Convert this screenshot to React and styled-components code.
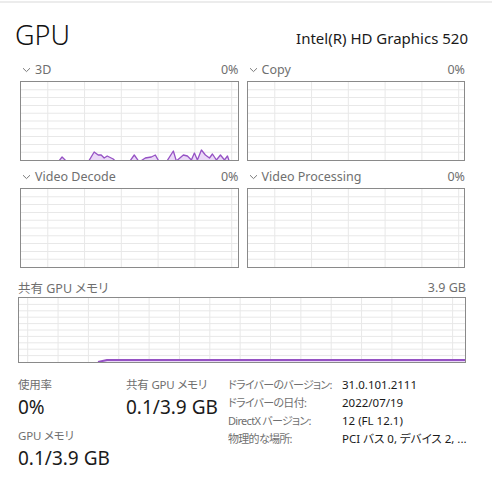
import React from 'react'
import styled, { createGlobalStyle } from 'styled-components'

const GlobalStyle = createGlobalStyle`
  html, body {
    margin: 0;
    padding: 0;
    background: #ffffff;
  }
  body {
    font-family: "Noto Sans", "Noto Sans CJK JP", sans-serif;
    font-feature-settings: "palt";
  }
`

const Page = styled.div`
  width: 492px;
  height: 490px;
  box-sizing: border-box;
  border-top: 2px solid #ececec;
  margin-top: 1px;
  padding: 0 26px 0 18px;
  overflow: hidden;
`

const Header = styled.div`
  display: flex;
  align-items: flex-end;
  justify-content: space-between;
  height: 48px;
`

const Title = styled.h1`
  margin: 0;
  margin-left: -3px;
  font-size: 27px;
  font-weight: 300;
  color: #111;
  line-height: 30px;
  padding-bottom: 1px;
`

const Device = styled.div`
  font-size: 15px;
  color: #1a1a1a;
  line-height: 20px;
  padding-bottom: 3px;
  margin-right: -2px;
`

const EngineGrid = styled.div`
  display: grid;
  grid-template-columns: 1fr 1fr;
  column-gap: 8px;
  padding: 0 1px 0 2px;
  margin-top: 9px;
`

const Panel = styled.div`
  display: flex;
  flex-direction: column;
  margin-bottom: ${p => p.$gap || 0}px;
`

const LabelRow = styled.div`
  display: flex;
  align-items: center;
  justify-content: space-between;
  height: 19px;
  font-size: 12.5px;
  color: #6f6f6f;
  margin-bottom: ${p => p.$space || 0}px;
`

const LabelLeft = styled.span`
  display: flex;
  align-items: center;
  gap: 4px;
`

const Chevron = styled.svg`
  width: 9px;
  height: 6px;
  margin-left: 2px;
`

const ChartBox = styled.div`
  height: ${p => p.$h}px;
  border: 1px solid #8a8a8a;
  box-sizing: border-box;
  background: #fff;
  svg {
    display: block;
    width: 100%;
    height: 100%;
  }
`

const Stats = styled.div`
  display: grid;
  grid-template-columns: 108px 102px 1fr;
  align-items: start;
  margin-top: 13px;
`

const StatCol = styled.div`
  display: flex;
  flex-direction: column;
`

const StatLabel = styled.div`
  font-size: 11.5px;
  line-height: 18px;
  letter-spacing: -0.2px;
  color: #707070;
`

const StatValue = styled.div`
  font-size: 19px;
  line-height: 26px;
  color: #1a1a1a;
  margin: 0 0 7px;
  white-space: nowrap;
`

const Details = styled.div`
  display: grid;
  grid-template-columns: 114px 1fr;
  align-content: start;
  font-size: 11.5px;
  line-height: 18px;
  white-space: nowrap;
`

const DetailKey = styled.span`
  color: #707070;
  font-size: 11px;
  letter-spacing: -0.7px;
`

const DetailVal = styled.span`
  color: #1a1a1a;
`

const LINE = '#9552c4'
const FILL = '#ead8f7'
const GRID = '#e8e8e8'

const threeD = [
  [37, 80], [41, 75], [45, 79], [50, 80], [53, 79], [57, 80], [67, 80], [73, 70], [77, 73],
  [80, 73], [83, 76], [86, 74], [92, 77], [95, 80], [108, 80], [113, 73], [118, 80], [124, 76],
  [130, 75], [134, 73], [138, 80], [145, 80], [152, 69], [155, 79], [162, 73], [166, 74],
  [170, 78], [173, 71], [176, 78], [180, 68], [184, 73], [188, 76], [191, 72], [195, 78],
  [199, 73], [203, 78], [206, 74], [208, 80],
]

const sharedMem = [[79, 64], [88, 62], [448, 62]]

const Chart = ({ w, h, rows, colStart, colStep, data, stroke = 1.3 }) => {
  const hLines = []
  for (let i = 1; i < rows; i++) hLines.push((h / rows) * i)
  const vLines = []
  for (let x = colStart; x < w; x += colStep) vLines.push(x)
  let area = null
  let line = null
  if (data) {
    line = data.map(p => p.join(',')).join(' ')
    area = `${data[0][0]},${h} ${line} ${data[data.length - 1][0]},${h}`
  }
  return (
    <ChartBox $h={h + 2}>
      <svg viewBox={`0 0 ${w} ${h}`} preserveAspectRatio="none">
        {hLines.map(y => (
          <line key={'h' + y} x1="0" x2={w} y1={y} y2={y} stroke={GRID} strokeWidth="1" />
        ))}
        {vLines.map(x => (
          <line key={'v' + x} x1={x} x2={x} y1="0" y2={h} stroke={GRID} strokeWidth="1" />
        ))}
        {data && <polygon points={area} fill={FILL} />}
        {data && <polyline points={line} fill="none" stroke={LINE} strokeWidth={stroke} strokeLinejoin="round" />}
      </svg>
    </ChartBox>
  )
}

const Arrow = () => (
  <Chevron viewBox="0 0 9 6">
    <path d="M1 1.2 L4.5 4.6 L8 1.2" fill="none" stroke="#7a7a7a" strokeWidth="1" />
  </Chevron>
)

const EnginePanel = ({ name, value, data, gap }) => (
  <Panel $gap={gap}>
    <LabelRow $space={2}>
      <LabelLeft><Arrow />{name}</LabelLeft>
      <span>{value}</span>
    </LabelRow>
    <Chart w={216} h={78} rows={10} colStart={26.7} colStep={36.7} data={data} />
  </Panel>
)

const details = [
  ['ドライバーのバージョン:', '31.0.101.2111'],
  ['ドライバーの日付:', '2022/07/19'],
  ['DirectX バージョン:', '12 (FL 12.1)'],
  ['物理的な場所:', 'PCI バス 0, デバイス 2, ...'],
]

const App = () => {
  return (
    <Page>
      <GlobalStyle />
      <Header>
        <Title>GPU</Title>
        <Device>Intel(R) HD Graphics 520</Device>
      </Header>
      <EngineGrid>
        <EnginePanel name="3D" value="0%" data={threeD} gap={6} />
        <EnginePanel name="Copy" value="0%" gap={6} />
        <EnginePanel name="Video Decode" value="0%" gap={10} />
        <EnginePanel name="Video Processing" value="0%" gap={10} />
      </EngineGrid>
      <Panel>
        <LabelRow $space={0}>
          <span>共有 GPU メモリ</span>
          <span>3.9 GB</span>
        </LabelRow>
        <Chart w={446} h={64} rows={10} colStart={8.7} colStep={30.35} data={sharedMem} stroke={2} />
      </Panel>
      <Stats>
        <StatCol>
          <StatLabel>使用率</StatLabel>
          <StatValue>0%</StatValue>
          <StatLabel>GPU メモリ</StatLabel>
          <StatValue>0.1/3.9 GB</StatValue>
        </StatCol>
        <StatCol>
          <StatLabel>共有 GPU メモリ</StatLabel>
          <StatValue>0.1/3.9 GB</StatValue>
        </StatCol>
        <Details>
          {details.map(([k, v]) => (
            <React.Fragment key={k}>
              <DetailKey>{k}</DetailKey>
              <DetailVal>{v}</DetailVal>
            </React.Fragment>
          ))}
        </Details>
      </Stats>
    </Page>
  )
}

export default App
